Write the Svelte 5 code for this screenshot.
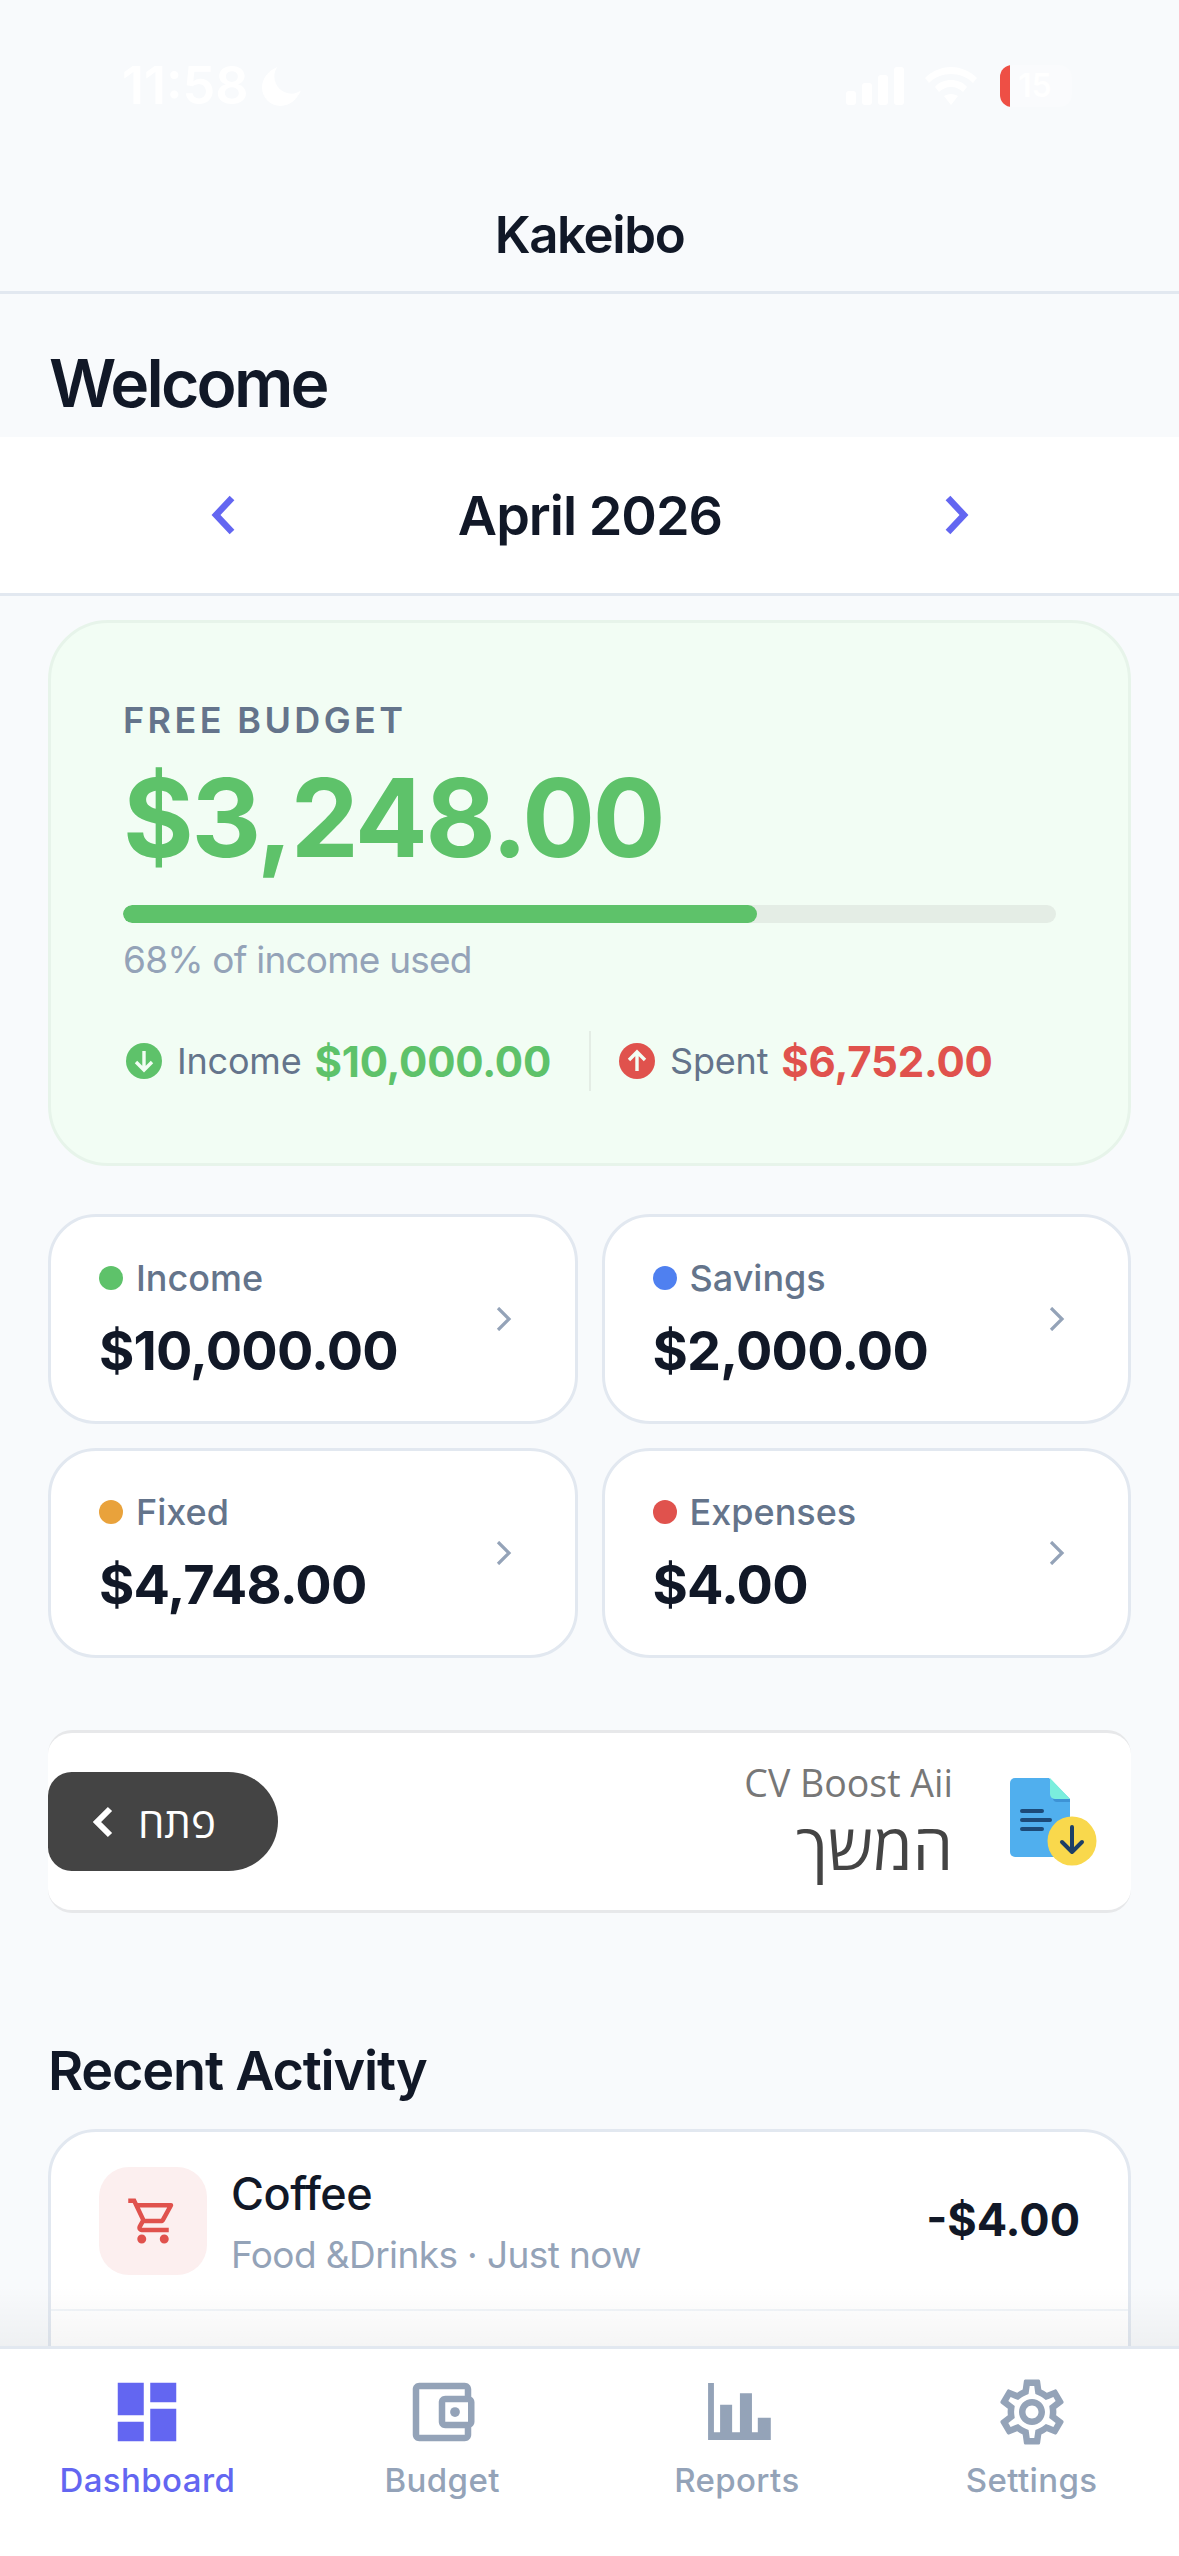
<script>
  // Summary cards under the free budget card
  const summary = [
    { label: 'Income', value: '$10,000.00', color: '#5ec26a' },
    { label: 'Savings', value: '$2,000.00', color: '#4f80f0' },
    { label: 'Fixed', value: '$4,748.00', color: '#e9a23b' },
    { label: 'Expenses', value: '$4.00', color: '#e0524d' }
  ];

  const usedPercent = 68;
</script>

<div class="screen">
  <header class="header">
    <div class="status">
      <div class="status-left">
        <span class="time">11:58</span>
        <svg class="moon" viewBox="0 0 40 40"><path d="M16 1C6 5 1 13 1 21c0 10 8 18 18 18 9 0 16-6 20-15-3 2-6 3-9 3-10 0-17-8-17-17 0-3 1-6 3-9z" fill="#fff" /></svg>
      </div>
      <div class="status-right">
        <svg class="signal" viewBox="0 0 58 38" fill="#fff">
          <rect x="0" y="24" width="10" height="14" rx="3" />
          <rect x="16" y="16" width="10" height="22" rx="3" />
          <rect x="32" y="8" width="10" height="30" rx="3" />
          <rect x="48" y="0" width="10" height="38" rx="3" />
        </svg>
        <svg class="wifi" viewBox="0 0 52 38" fill="#fff">
          <path d="M26 0c10 0 19 4 26 11l-4 5C42 10 34 7 26 7S10 10 4 16l-4-5C7 4 16 0 26 0z" />
          <path d="M26 13c6 0 12 2 16 7l-4 5c-3-3-7-5-12-5s-9 2-12 5l-4-5c4-5 10-7 16-7z" />
          <path d="M26 27c3 0 5 1 7 2l-7 9-7-9c2-1 4-2 7-2z" />
        </svg>
        <div class="battery">
          <span class="battery-fill"></span>
          <span class="battery-num">15</span>
        </div>
      </div>
    </div>
    <h1 class="app-title">Kakeibo</h1>
  </header>

  <main class="main">
    <h2 class="welcome">Welcome</h2>

    <div class="month-bar">
      <svg class="month-arrow" viewBox="0 0 30 42"><path d="M24 4 8 21l16 17" /></svg>
      <span class="month">April 2026</span>
      <svg class="month-arrow" viewBox="0 0 30 42"><path d="M6 4l16 17L6 38" /></svg>
    </div>

    <div class="content">
      <section class="budget">
        <div class="budget-label">FREE BUDGET</div>
        <div class="budget-amount">$3,248.00</div>
        <div class="track"><div class="fill" style="width: {usedPercent}%"></div></div>
        <div class="used">{usedPercent}% of income used</div>
        <div class="totals">
          <div class="total">
            <svg class="total-icon" viewBox="0 0 36 36">
              <circle cx="18" cy="18" r="18" fill="#5ec26a" />
              <path d="M18 8v19M10 19l8 8 8-8" fill="none" stroke="#f2fdf4" stroke-width="3.4" />
            </svg>
            <span class="total-label">Income</span>
            <span class="total-value income">$10,000.00</span>
          </div>
          <div class="total-divider"></div>
          <div class="total">
            <svg class="total-icon" viewBox="0 0 36 36">
              <circle cx="18" cy="18" r="18" fill="#e0524d" />
              <path d="M18 28V9M10 17l8-8 8 8" fill="none" stroke="#f2fdf4" stroke-width="3.4" />
            </svg>
            <span class="total-label">Spent</span>
            <span class="total-value spent">$6,752.00</span>
          </div>
        </div>
      </section>

      <section class="summary">
        {#each summary as item}
          <div class="summary-card">
            <div>
              <div class="summary-label">
                <span class="dot" style="background: {item.color}"></span>
                {item.label}
              </div>
              <div class="summary-value">{item.value}</div>
            </div>
            <svg class="chevron" viewBox="0 0 16 24"><path d="M2 1l11 11L2 23" /></svg>
          </div>
        {/each}
      </section>

      <section class="ad">
        <div class="ad-button">
          <svg class="ad-chevron" viewBox="0 0 22 32"><path d="M18 3 5 16l13 13" /></svg>
          <span class="ad-open" dir="rtl">פתח</span>
        </div>
        <div class="ad-text">
          <div class="ad-brand">CV Boost Aii</div>
          <div class="ad-title" dir="rtl">המשך</div>
        </div>
        <svg class="ad-icon" viewBox="0 0 90 90">
          <path d="M6 1h34l21 21v53a5 5 0 0 1-5 5H6a5 5 0 0 1-5-5V6a5 5 0 0 1 5-5z" fill="#50afee" />
          <path d="M44 22h17v3H48a4 4 0 0 1-4-3z" fill="#3d93d6" />
          <path d="M41 1l20 21H46a5 5 0 0 1-5-5z" fill="#7aeedd" />
          <path d="M13 34h20M13 43h28M13 52h20" stroke="#1c4a78" stroke-width="4" stroke-linecap="round" />
          <circle cx="63" cy="64" r="24.5" fill="#f9d84c" />
          <path d="M63 50v25M53 65l10 10 10-10" fill="none" stroke="#1c3f66" stroke-width="4" stroke-linecap="round" stroke-linejoin="round" />
        </svg>
      </section>

      <h2 class="recent-title">Recent Activity</h2>

      <section class="activity">
        <div class="activity-row">
          <div class="activity-icon">
            <svg viewBox="0 0 24 24"><path d="M15.55 13c.75 0 1.41-.41 1.75-1.03l3.58-6.49c.37-.66-.11-1.48-.87-1.48H5.21l-.94-2H1v2h2l3.6 7.59-1.35 2.44C4.52 15.37 5.48 17 7 17h12v-2H7l1.1-2h7.45zM6.16 6h12.15l-2.76 5H8.53L6.16 6zM7 18c-1.1 0-1.99.9-1.99 2S5.9 22 7 22s2-.9 2-2-.9-2-2-2zm10 0c-1.1 0-1.99.9-1.99 2s.89 2 1.99 2 2-.9 2-2-.9-2-2-2z" /></svg>
          </div>
          <div class="activity-info">
            <div class="activity-name">Coffee</div>
            <div class="activity-sub">Food &amp;Drinks · Just now</div>
          </div>
          <div class="activity-amount">-$4.00</div>
        </div>
        <div class="activity-row next">
          <div class="activity-icon peek"></div>
        </div>
      </section>
    </div>
    <div class="fade"></div>
  </main>

  <nav class="tabbar">
    <div class="tab active">
      <svg viewBox="0 0 24 24"><path d="M3 13h8V3H3v10zm0 8h8v-6H3v6zm10 0h8V11h-8v10zm0-18v6h8V3h-8z" /></svg>
      <span>Dashboard</span>
    </div>
    <div class="tab">
      <svg viewBox="0 0 24 24"><path d="M21 7.28V5c0-1.1-.9-2-2-2H5c-1.11 0-2 .9-2 2v14c0 1.1.89 2 2 2h14c1.1 0 2-.9 2-2v-2.28c.59-.35 1-.98 1-1.72V9c0-.74-.41-1.37-1-1.72zM20 9v6h-7V9h7zM5 19V5h14v2h-6c-1.1 0-2 .9-2 2v6c0 1.1.9 2 2 2h6v2H5z" /><circle cx="16" cy="12" r="1.5" /></svg>
      <span>Budget</span>
    </div>
    <div class="tab">
      <svg viewBox="0 0 24 24"><path d="M3.1 3.1h1.8v15.1h1.9V9.8h3.7v8.4h2.4V6.2h3.7v12h1.8v-4.4h4v6.8H3.1z" /></svg>
      <span>Reports</span>
    </div>
    <div class="tab">
      <svg viewBox="0 0 24 24"><path d="M19.43 12.98c.04-.32.07-.64.07-.98 0-.34-.03-.66-.07-.98l2.11-1.65c.19-.15.24-.42.12-.64l-2-3.46c-.09-.16-.26-.25-.44-.25-.06 0-.12.01-.17.03l-2.49 1c-.52-.4-1.08-.73-1.69-.98l-.38-2.65C14.46 2.18 14.25 2 14 2h-4c-.25 0-.46.18-.49.42l-.38 2.65c-.61.25-1.17.59-1.69.98l-2.49-1c-.06-.02-.12-.03-.18-.03-.17 0-.34.09-.43.25l-2 3.46c-.13.22-.07.49.12.64l2.11 1.65c-.04.32-.07.65-.07.98 0 .33.03.66.07.98l-2.11 1.65c-.19.15-.24.42-.12.64l2 3.46c.09.16.26.25.44.25.06 0 .12-.01.17-.03l2.49-1c.52.4 1.08.73 1.69.98l.38 2.65c.03.24.24.42.49.42h4c.25 0 .46-.18.49-.42l.38-2.65c.61-.25 1.17-.59 1.69-.98l2.49 1c.06.02.12.03.18.03.17 0 .34-.09.43-.25l2-3.46c.12-.22.07-.49-.12-.64l-2.11-1.65zm-1.98-1.71c.04.31.05.52.05.73 0 .21-.02.43-.05.73l-.14 1.13.89.7 1.08.84-.7 1.21-1.27-.51-1.04-.42-.9.68c-.43.32-.84.56-1.25.73l-1.06.43-.16 1.13-.2 1.35h-1.4l-.19-1.35-.16-1.13-1.06-.43c-.43-.18-.83-.41-1.23-.71l-.91-.7-1.06.43-1.27.51-.7-1.21 1.08-.84.89-.7-.14-1.13c-.03-.31-.05-.54-.05-.74s.02-.43.05-.73l.14-1.13-.89-.7-1.08-.84.7-1.21 1.27.51 1.04.42.9-.68c.43-.32.84-.56 1.25-.73l1.06-.43.16-1.13.2-1.35h1.39l.19 1.35.16 1.13 1.06.43c.43.18.83.41 1.23.71l.91.7 1.06-.43 1.27-.51.7 1.21-1.07.85-.89.7.14 1.13zM12 8c-2.21 0-4 1.79-4 4s1.79 4 4 4 4-1.79 4-4-1.79-4-4-4zm0 6c-1.1 0-2-.9-2-2s.9-2 2-2 2 .9 2 2-.9 2-2 2z" /></svg>
      <span>Settings</span>
    </div>
  </nav>
</div>

<style>
  :global(body) {
    margin: 0;
    background: #f8fafc;
  }

  .screen {
    width: 1179px;
    height: 2556px;
    display: flex;
    flex-direction: column;
    overflow: hidden;
    background: #f8fafc;
    color: #111827;
    font-family: Inter, "Noto Sans", sans-serif;
  }

  /* header */
  .header {
    flex: none;
    height: 291px;
    box-sizing: content-box;
    border-bottom: 3px solid #e2e8f0;
  }

  .status {
    height: 176px;
    box-sizing: border-box;
    padding: 64px 107px 0 122px;
    display: flex;
    justify-content: space-between;
    align-items: flex-start;
  }

  .status-left,
  .status-right {
    display: flex;
    align-items: center;
    height: 44px;
  }

  .time {
    color: #fff;
    font-size: 52px;
    font-weight: 600;
    line-height: 44px;
  }

  .moon {
    width: 41px;
    height: 41px;
    margin-left: 12px;
  }

  .signal {
    width: 58px;
    height: 38px;
  }

  .wifi {
    width: 52px;
    height: 38px;
    margin-left: 21px;
  }

  .battery {
    position: relative;
    width: 72px;
    height: 42px;
    margin-left: 23px;
    border-radius: 12px;
    background: rgba(255, 255, 255, 0.25);
    overflow: hidden;
  }

  .battery-fill {
    position: absolute;
    left: 0;
    top: 0;
    bottom: 0;
    width: 10px;
    background: #ee4f45;
  }

  .battery-num {
    position: absolute;
    left: 18px;
    top: 0;
    color: #fff;
    font-size: 32px;
    font-weight: 600;
    line-height: 42px;
  }

  .app-title {
    margin: 0;
    text-align: center;
    font-size: 51px;
    font-weight: 600;
    letter-spacing: -1.4px;
    line-height: 118px;
  }

  /* main area */
  .main {
    position: relative;
    flex: 1;
    min-height: 0;
    overflow: hidden;
  }

  .welcome {
    margin: 0;
    height: 143px;
    padding: 49px 49px 0;
    box-sizing: border-box;
    font-size: 66px;
    font-weight: 600;
    letter-spacing: -2.8px;
    line-height: 80px;
  }

  .month-bar {
    height: 156px;
    box-sizing: content-box;
    padding: 0 207px 0 208px;
    display: flex;
    align-items: center;
    justify-content: space-between;
    background: #fff;
    border-bottom: 3px solid #e2e8f0;
  }

  .month {
    font-size: 54px;
    font-weight: 600;
    letter-spacing: -1px;
  }

  .month-arrow {
    width: 30px;
    height: 42px;
    fill: none;
    stroke: #6366f1;
    stroke-width: 6.5;
  }

  .content {
    padding: 24px 48px 0;
  }

  /* free budget card */
  .budget {
    height: 546px;
    box-sizing: border-box;
    padding: 72px 72px 0;
    background: #f2fdf4;
    border: 3px solid #e7f4ea;
    border-radius: 60px;
  }

  .budget-label {
    color: #64748b;
    font-size: 36px;
    font-weight: 600;
    letter-spacing: 3.4px;
    line-height: 50px;
  }

  .budget-amount {
    margin-top: 8px;
    color: #5ec26a;
    font-size: 108px;
    font-weight: 700;
    letter-spacing: -2.2px;
    line-height: 130px;
  }

  .track {
    margin-top: 22px;
    height: 18px;
    border-radius: 9px;
    background: #e4ede5;
    overflow: hidden;
  }

  .fill {
    height: 100%;
    border-radius: 9px;
    background: #5ec26a;
  }

  .used {
    margin-top: 14px;
    color: #94a3b8;
    font-size: 37px;
    letter-spacing: -0.8px;
    line-height: 46px;
  }

  .totals {
    margin-top: 48px;
    display: flex;
    align-items: center;
    height: 60px;
  }

  .total {
    display: flex;
    align-items: center;
  }

  .total-icon {
    width: 36px;
    height: 36px;
    margin-left: 3px;
  }

  .total-label {
    margin-left: 15px;
    color: #64748b;
    font-size: 36px;
    letter-spacing: -0.2px;
  }

  .total-value {
    margin-left: 13px;
    font-size: 42px;
    font-weight: 700;
    letter-spacing: -0.2px;
  }

  .income {
    color: #5ec26a;
  }

  .spent {
    color: #e0524d;
  }

  .total-divider {
    width: 2px;
    height: 60px;
    margin: 0 25px 0 38px;
    background: #e4ede5;
  }

  /* summary grid */
  .summary {
    margin-top: 48px;
    display: grid;
    grid-template-columns: 1fr 1fr;
    gap: 24px;
  }

  .summary-card {
    height: 210px;
    box-sizing: border-box;
    padding: 0 63px 0 48px;
    display: flex;
    align-items: center;
    justify-content: space-between;
    background: #fff;
    border: 3px solid #e2e8f0;
    border-radius: 48px;
  }

  .summary-label {
    display: flex;
    align-items: center;
    gap: 13px;
    color: #64748b;
    font-size: 36px;
    font-weight: 500;
    line-height: 48px;
  }

  .dot {
    width: 24px;
    height: 24px;
    border-radius: 50%;
  }

  .summary-value {
    margin-top: 16px;
    font-size: 54px;
    font-weight: 700;
    letter-spacing: -0.8px;
    line-height: 66px;
    color: #111827;
  }

  .chevron {
    width: 16px;
    height: 24px;
    fill: none;
    stroke: #94a3b8;
    stroke-width: 3.2;
  }

  /* ad banner */
  .ad {
    margin-top: 72px;
    height: 183px;
    box-sizing: border-box;
    display: flex;
    align-items: center;
    background: #fff;
    border-top: 3px solid #e7e8ea;
    border-bottom: 3px solid #e7e8ea;
    border-radius: 24px;
    overflow: hidden;
  }

  .ad-button {
    width: 230px;
    height: 99px;
    box-sizing: border-box;
    padding-left: 44px;
    display: flex;
    align-items: center;
    gap: 24px;
    background: #444;
    border-radius: 24px 50px 50px 24px;
  }

  .ad-chevron {
    width: 22px;
    height: 32px;
    fill: none;
    stroke: #fff;
    stroke-width: 6;
  }

  .ad-open {
    color: #fff;
    font-family: "Open Sans", "DejaVu Sans", sans-serif;
    font-size: 42px;
    font-weight: 500;
  }

  .ad-text {
    flex: 1;
    text-align: right;
    padding-right: 56px;
    font-family: "Open Sans", "DejaVu Sans", sans-serif;
  }

  .ad-brand {
    color: #777;
    font-size: 37.5px;
    line-height: 48px;
  }

  .ad-title {
    color: #444;
    font-size: 64px;
    font-weight: 500;
    line-height: 78px;
    text-align: right;
  }

  .ad-icon {
    flex: none;
    width: 90px;
    height: 90px;
    margin-right: 32px;
  }

  /* recent activity */
  .recent-title {
    margin: 125px 0 0;
    font-size: 54px;
    font-weight: 600;
    letter-spacing: -1.2px;
    line-height: 66px;
  }

  .activity {
    margin-top: 25px;
    background: #fff;
    border: 3px solid #e2e8f0;
    border-radius: 48px;
    height: 400px;
  }

  .activity-row {
    height: 179px;
    box-sizing: border-box;
    padding: 35px 48px 0;
    display: flex;
    align-items: flex-start;
    border-bottom: 2px solid #f1f5f9;
  }

  .activity-row.next {
    border-bottom: none;
  }

  .activity-icon {
    flex: none;
    width: 108px;
    height: 108px;
    border-radius: 30px;
    background: #fcefef;
    display: flex;
    align-items: center;
    justify-content: center;
  }

  .activity-icon svg {
    width: 54px;
    height: 54px;
    fill: #e0524d;
  }

  .activity-icon.peek {
    background: #fdf6e9;
  }

  .activity-info {
    flex: 1;
    margin-left: 24px;
    margin-top: -2px;
  }

  .activity-name {
    font-size: 45px;
    font-weight: 500;
    letter-spacing: -0.5px;
    line-height: 58px;
  }

  .activity-sub {
    margin-top: 8px;
    color: #94a3b8;
    font-size: 37px;
    letter-spacing: -0.6px;
    line-height: 48px;
  }

  .activity-amount {
    margin-top: 26px;
    font-size: 45px;
    font-weight: 700;
    line-height: 54px;
  }

  .fade {
    position: absolute;
    left: 0;
    right: 0;
    bottom: 0;
    height: 60px;
    background: linear-gradient(to bottom, rgba(0, 0, 0, 0), rgba(0, 0, 0, 0.04));
  }

  /* tab bar */
  .tabbar {
    flex: none;
    height: 210px;
    box-sizing: border-box;
    padding-top: 24px;
    display: grid;
    grid-template-columns: repeat(4, 1fr);
    background: #fff;
    border-top: 3px solid #e2e8f0;
  }

  .tab {
    display: flex;
    flex-direction: column;
    align-items: center;
    color: #94a3b8;
    fill: #94a3b8;
    font-size: 33px;
    font-weight: 500;
    letter-spacing: 0.4px;
  }

  .tab svg {
    width: 78px;
    height: 78px;
  }

  .tab span {
    margin-top: 6px;
    line-height: 46px;
  }

  .tab.active {
    color: #6366f1;
    fill: #6366f1;
  }
</style>
